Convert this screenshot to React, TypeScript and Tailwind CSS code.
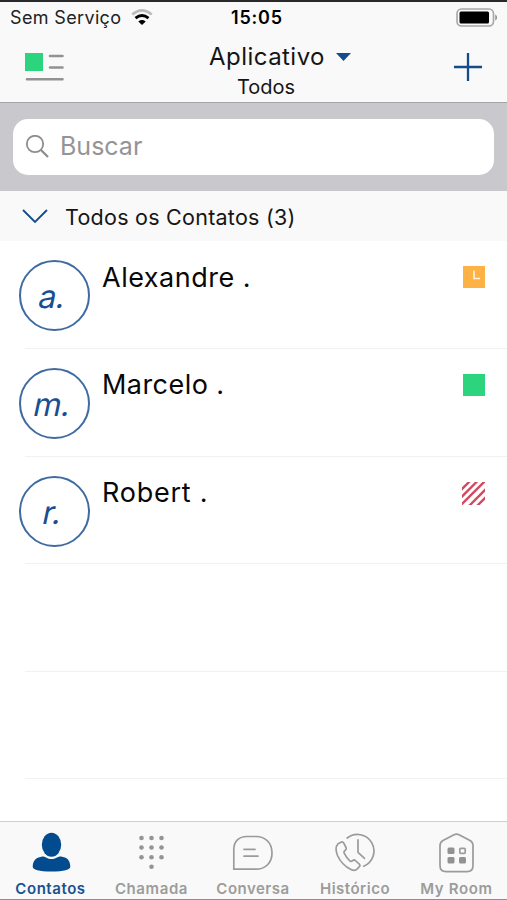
import React from "react";

type Status = "away" | "online" | "busy";

const contacts: { name: string; initial: string; status: Status; row: string; tracking: string }[] = [
  { name: "Alexandre .", initial: "a.", status: "away", row: "h-[108px]", tracking: "tracking-[0.5px] pt-[19px]" },
  { name: "Marcelo .", initial: "m.", status: "online", row: "h-[108px]", tracking: "tracking-[0.45px] pt-[18px]" },
  { name: "Robert .", initial: "r.", status: "busy", row: "h-[107px]", tracking: "tracking-[0.75px] pt-[18px]" },
];

function StatusIcon({ status }: { status: Status }) {
  if (status === "online") return <div className="size-[22px] bg-[#2bd47d]" />;
  if (status === "away")
    return (
      <svg className="size-[22px] bg-[#fcb245]" viewBox="0 0 22 22" fill="none">
        <path d="M11 4.5v8h6" stroke="#fff3dc" strokeWidth="1.6" />
      </svg>
    );
  return (
    <svg className="size-[23px]" viewBox="0 0 23 23" fill="none" stroke="#d4485f" strokeWidth="2.3">
      <path d="M-1 8 8-1M-1 15.5 15.5-1M-1 23 23-1M7 24 24 7M15 24l9-9" />
    </svg>
  );
}

function StatusBar() {
  return (
    <div className="grid h-[33px] grid-cols-3 items-center border-t-2 border-[#29282b] pl-[10px] pr-[9px] text-[18px] leading-[31px]">
      <div className="flex items-center gap-[10px] whitespace-nowrap text-[#222]">
        <span className="tracking-[0.35px]">Sem Serviço</span>
        <svg className="h-[17px] w-[22px]" viewBox="0 0 22 17" fill="none">
          <path d="M1.3 5.5Q11-2.8 20.7 5.5" stroke="#bbb" strokeWidth="2.6" />
          <path d="M4.5 9.2Q11 3.8 17.5 9.2" stroke="#000" strokeWidth="2.8" />
          <path d="M7.3 12.4Q11 9.6 14.7 12.4L11 16Z" fill="#000" />
        </svg>
      </div>
      <span className="pl-[6px] text-center font-semibold text-black tracking-[0.8px]">15:05</span>
      <svg className="h-[19px] w-[42px] justify-self-end" viewBox="0 0 42 19" fill="none">
        <rect x="1" y="1" width="36.5" height="17" rx="4.5" stroke="#a6a6a6" strokeWidth="1.6" />
        <rect x="3.5" y="3.5" width="29.5" height="12" rx="1.5" fill="#000" />
        <path d="M39.3 6.5c2.2.8 2.2 5.2 0 6Z" fill="#888" />
      </svg>
    </div>
  );
}

function NavBar() {
  return (
    <div className="flex h-[70px] items-start justify-between border-b border-[#a5a5a7] pl-6 pr-6">
      <svg className="mt-[19px] h-[30px] w-[42px]" viewBox="0 0 42 30" fill="none">
        <rect x="1" y="1" width="18" height="18" fill="#2bd47d" />
        <path d="M26 4h12.5M26 15.5h12.5M3 27.2h35.5" stroke="#929292" strokeWidth="2.6" strokeLinecap="round" />
      </svg>
      <div className="flex flex-col items-center pl-[41px] pt-[9px]">
        <div className="flex items-center gap-[11px]">
          <span className="text-[24px] leading-[30px] tracking-[0.45px]">Aplicativo</span>
          <svg className="h-2 w-[15px]" viewBox="0 0 15 8">
            <path d="M0 0h15L7.5 8Z" fill="#144b8c" />
          </svg>
        </div>
        <span className="mr-[28px] text-[20px] leading-[30px]">Todos</span>
      </div>
      <svg className="mt-[19px] size-[30px]" viewBox="0 0 30 30" fill="none">
        <path d="M15 1v28M1 15h28" stroke="#144b8c" strokeWidth="2.3" />
      </svg>
    </div>
  );
}

const tabIcons: { label: string; icon: React.ReactNode; width: string; tracking: string }[] = [
  {
    label: "Contatos", width: "w-[101px]", tracking: "tracking-[0.55px]",
    icon: (
      <svg className="h-[42px] w-[42px]" viewBox="0 0 42 42" fill="#034b8f">
        <ellipse cx="21.5" cy="13.8" rx="9.7" ry="12" />
        <path d="M12.5 25.5C15 25 17 28 21.5 28S28 25 31 25.5C37 26.3 40 29 40.3 35.5 40.3 39 34 40.5 21.5 40.5S2.7 39 2.7 35.5C3 29 6.5 26.3 12.5 25.5Z" />
      </svg>
    ),
  },
  {
    label: "Chamada", width: "w-[101px]", tracking: "tracking-[0.6px]",
    icon: (
      <svg className="h-[42px] w-[42px]" viewBox="0 0 42 42" fill="#949494">
        {[7, 16.5, 26.2].map((y) => [10.5, 20.5, 30.5].map((x) => <circle key={`${x}-${y}`} cx={x} cy={y} r="2.3" />))}
        <circle cx="20.5" cy="35.7" r="2.3" />
      </svg>
    ),
  },
  {
    label: "Conversa", width: "w-[102px]", tracking: "tracking-[0.5px]",
    icon: (
      <svg className="h-[42px] w-[42px]" viewBox="0 0 42 42" fill="none" stroke="#9b9b9b" strokeWidth="1.7" strokeLinecap="round">
        <path d="M1.8 38.2V18.5C1.8 10 7 5.5 15 5.5h9c9.5 0 16 6.5 16 16.4 0 9.8-6.5 16.3-16 16.3Z" />
        <path d="M12 18.4h11M12 25.2h14" />
      </svg>
    ),
  },
  {
    label: "Histórico", width: "w-[102px]", tracking: "tracking-[0.5px]",
    icon: (
      <svg className="h-[42px] w-[42px]" viewBox="0 0 42 42" fill="none" stroke="#9b9b9b" strokeWidth="1.7" strokeLinecap="round" strokeLinejoin="round">
        <path d="M13.2 7A16.5 16.5 0 1 1 29.7 35.2" />
        <path d="M24 8.8v12.5l6.5 6" />
        <path d="M4 12.8 7 11.2Q8.8 10.4 9.8 12.2L12 16.5Q12.7 18 11.3 19.2 9.4 20.5 10.2 22.2 12.5 27 15.8 29.8 17.2 31 18.6 29.7 20 28.4 21.3 29.5L25.3 33.2Q26.6 34.5 25.2 35.9L22.7 38.3Q20.5 40.2 17 38.5 8 34.4 3.5 24.5 0.4 16.5 4 12.8Z" />
      </svg>
    ),
  },
  {
    label: "My Room", width: "w-[101px]", tracking: "tracking-[0.65px]",
    icon: (
      <svg className="h-[42px] w-[42px]" viewBox="0 0 42 42" fill="none" stroke="#9b9b9b" strokeWidth="1.7">
        <path d="M18 3.7Q20.5 2.4 23 3.7L34 9.5Q37 11.2 37 14.5V34.5Q37 40.7 30.8 40.7H10.2Q4 40.7 4 34.5V14.5Q4 11.2 7 9.5Z" />
        <g fill="#929292" stroke="none">
          <rect x="11.5" y="16.5" width="7" height="6.5" rx="1.5" />
          <rect x="11.5" y="26" width="7" height="6.5" rx="1.5" />
          <rect x="23" y="26" width="7" height="6.5" rx="1.5" />
        </g>
        <rect x="23.8" y="17.3" width="5.4" height="5" rx="1" />
      </svg>
    ),
  },
];

export default function App() {
  return (
    <div className="flex h-[900px] w-[507px] flex-col overflow-hidden bg-white font-['Inter','Liberation_Sans',sans-serif] text-[#151515]">
      <header className="h-[103px] bg-[#f9f9f9]">
        <StatusBar />
        <NavBar />
      </header>
      <div className="h-[88px] bg-[#c9c8cd] px-[13px] pt-4">
        <div className="flex h-14 items-center gap-[11px] rounded-[15px] bg-white pl-3">
          <svg className="size-6" viewBox="0 0 24 24" fill="none" stroke="#8d8d8f" strokeWidth="1.8">
            <circle cx="10" cy="9" r="8.2" />
            <path d="m16 15 7 7" strokeWidth="2.3" />
          </svg>
          <span className="pb-[2px] text-[25px] leading-[30px] text-[#949496]">Buscar</span>
        </div>
      </div>
      <div className="flex h-[50px] items-center gap-[17px] bg-[#f9f9f9] pl-[22px]">
        <svg className="h-[15px] w-[26px]" viewBox="0 0 26 15" fill="none">
          <path d="m1 1 12 12L25 1" stroke="#144b8c" strokeWidth="1.8" />
        </svg>
        <span className="pt-px text-[21.5px] leading-[30px] tracking-[0.25px]">Todos os Contatos (3)</span>
      </div>
      <main className="flex flex-1 flex-col">
        {contacts.map((c) => (
          <div key={c.name} className={`flex flex-col ${c.row}`}>
            <div className="flex flex-1 items-start pl-[19px] pr-[22px]">
              <div className="mt-[19px] flex size-[71px] items-center justify-center rounded-full border-2 border-[#3f6ba1] pr-[4px] pt-[2px] text-[32px] font-normal text-[#174f92]">
                <span className="-skew-x-12 tracking-[-0.3px]">{c.initial}</span>
              </div>
              <span className={`ml-[12px] flex-1 text-[27px] leading-[36px] text-[#080808] ${c.tracking}`}>{c.name}</span>
              <div className="mt-[25px]">
                <StatusIcon status={c.status} />
              </div>
            </div>
            <div className="ml-[25px] h-px bg-[#f1f1f1]" />
          </div>
        ))}
        <div className="ml-[25px] h-[108px] border-b border-[#f1f1f1]" />
        <div className="ml-[25px] h-[107px] border-b border-[#f1f1f1]" />
      </main>
      <nav className="flex h-[79px] border-b border-t border-b-[#8f8f8f] border-t-[#cfcfcf] bg-[#f9f9f9]">
        {tabIcons.map((t, i) => (
          <div key={t.label} className={`flex flex-col items-center pt-[9px] ${t.width}`}>
            {t.icon}
            <span
              className={`mt-[6px] whitespace-nowrap text-[15px] font-semibold leading-5 ${t.tracking} ${i === 0 ? "text-[#1b518f]" : "text-[#9c9c9c]"}`}
            >
              {t.label}
            </span>
          </div>
        ))}
      </nav>
    </div>
  );
}
